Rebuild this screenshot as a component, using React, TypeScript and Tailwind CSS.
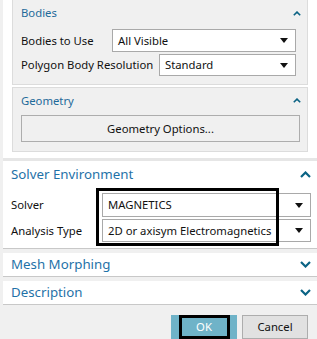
import React from "react";

const Tri = () => (
  <svg width="8" height="5" viewBox="0 0 8 5" className="shrink-0">
    <polygon points="0,0 8,0 4,5" fill="#111" />
  </svg>
);

const ChevUp = ({ size = 11 }: { size?: number }) => (
  <svg width={size} height={Math.round(size * 0.64)} viewBox="0 0 11 7" className="shrink-0">
    <polyline points="1,6 5.5,1.5 10,6" fill="none" stroke="#0b6384" strokeWidth="2.2" />
  </svg>
);

const ChevDown = () => (
  <svg width="11" height="7" viewBox="0 0 11 7" className="shrink-0">
    <polyline points="1,1 5.5,5.5 10,1" fill="none" stroke="#0b6384" strokeWidth="2.2" />
  </svg>
);

const Dropdown = ({ text, h = 23 }: { text: string; h?: number }) => (
  <div
    className="flex-1 flex items-center justify-between bg-white border border-[#a9a9a9] pl-[5px] pr-[7px]"
    style={{ height: h }}
  >
    <span className="text-[#111] leading-none whitespace-nowrap">{text}</span>
    <Tri />
  </div>
);

export default function App() {
  return (
    <div className="w-[317px] h-[339px] bg-[#f0f0f0] pl-[3px] flex flex-col overflow-hidden font-['Noto_Sans',sans-serif] text-[11.3px] text-[#111]">
      {/* top block */}
      <div className="bg-white h-[158px] px-[9px] shrink-0">
        <div className="bg-[#f0f0f0] border-x border-b border-[#dcdcdc] h-[85px] pl-[8px] pr-[11px]">
          <div className="h-[26px] flex items-center justify-between -mr-[5px]">
            <span className="text-[#1e6a9a] leading-none">Bodies</span>
            <ChevUp size={8} />
          </div>
          <div className="flex items-center h-[23px] mt-[3px]">
            <span className="w-[91px] shrink-0 leading-none whitespace-nowrap">Bodies to Use</span>
            <Dropdown text="All Visible" />
          </div>
          <div className="flex items-center h-[22px] mt-[2px]">
            <span className="w-[138px] shrink-0 leading-none whitespace-nowrap">Polygon Body Resolution</span>
            <Dropdown text="Standard" h={22} />
          </div>
        </div>
        <div className="bg-[#f0f0f0] border border-[#dcdcdc] h-[65px] mt-[2px] pl-[8px] pr-[7px]">
          <div className="h-[25px] flex items-center justify-between -mr-[1px]">
            <span className="text-[#1e6a9a] leading-none">Geometry</span>
            <ChevUp size={8} />
          </div>
          <div className="h-[27px] mt-[2px] border border-[#adadad] bg-[#f0f0f0] flex items-center justify-center">
            <span className="leading-none">Geometry Options...</span>
          </div>
        </div>
      </div>
      <div className="h-[3px] bg-[#e6e6e6] shrink-0" />
      {/* Solver Environment */}
      <div className="relative bg-white h-[88px] shrink-0 border-b border-[#c8c8c8] pl-[8px] pr-[6px]">
        <div className="h-[27px] flex items-center justify-between">
          <span className="text-[13.3px] text-[#1f72a8] leading-none">Solver Environment</span>
          <ChevUp />
        </div>
        <div className="flex items-center mt-[5px] h-[24px]">
          <span className="w-[91px] shrink-0 leading-none">Solver</span>
          <Dropdown text="MAGNETICS" h={24} />
        </div>
        <div className="flex items-center mt-[2px] h-[23px]">
          <span className="w-[91px] shrink-0 leading-none">Analysis Type</span>
          <Dropdown text="2D or axisym Electromagnetics" h={23} />
        </div>
        <div className="absolute left-[93px] top-[27px] w-[183px] h-[58px] border-[3px] border-black pointer-events-none" />
      </div>
      {/* Mesh Morphing */}
      <div className="bg-white h-[24px] mt-[4px] shrink-0 border-b border-[#c8c8c8] pl-[8px] pr-[6px] flex items-center justify-between">
        <span className="text-[13.3px] text-[#1f72a8] leading-none">Mesh Morphing</span>
        <ChevDown />
      </div>
      <div className="bg-white h-[24px] mt-[4px] shrink-0 border-b border-[#c8c8c8] pl-[8px] pr-[6px] flex items-center justify-between">
        <span className="text-[13.3px] text-[#1f72a8] leading-none">Description</span>
        <ChevDown />
      </div>
      {/* footer */}
      <div className="flex justify-end gap-[5px] pr-[9px] mt-[10px]">
        <div className="w-[66px] h-[24px] bg-[#6fb3c8] flex items-center justify-center">
          <div className="w-[51px] h-full border-[3px] border-black flex items-center justify-center">
            <span className="text-white leading-none">OK</span>
          </div>
        </div>
        <div className="w-[66px] h-[24px] bg-[#e1e1e1] border border-[#adadad] flex items-center justify-center">
          <span className="leading-none">Cancel</span>
        </div>
      </div>
    </div>
  );
}
